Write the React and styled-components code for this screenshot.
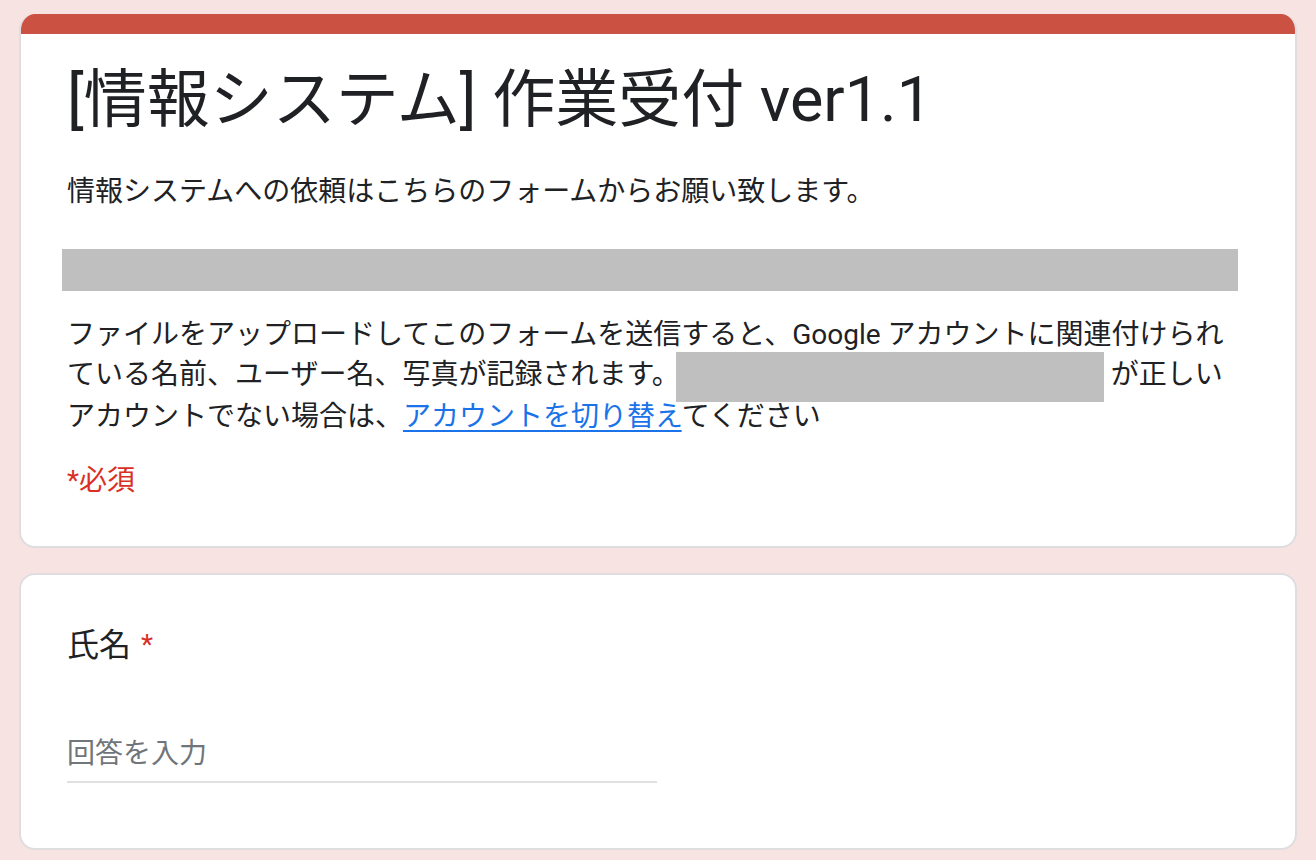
import React from 'react'
import styled, { createGlobalStyle } from 'styled-components'

const GlobalStyle = createGlobalStyle`
  html, body {
    margin: 0;
    padding: 0;
    background: #f6e3e2;
  }
  body {
    font-family: Roboto, "Noto Sans CJK JP", sans-serif;
    color: #202124;
  }
`;

const Page = styled.div`
  width: 1278px;
  margin: 0 auto;
  padding: 14px 0 12px;
  display: flex;
  flex-direction: column;
  gap: 25px;
`;

const Card = styled.section`
  background: #fff;
  border: 2px solid #dfdde0;
  border-radius: 16px;
  overflow: hidden;
  display: flex;
  flex-direction: column;
`;

const HeaderCard = styled(Card)`
  border-top: none;
  &::before {
    content: '';
    display: block;
    height: 20px;
    margin: 0 -2px;
    background: #cb5142;
  }
`;

const HeaderBody = styled.div`
  padding: 26px 46px 45px;
  display: flex;
  flex-direction: column;
`;

const Title = styled.h1`
  margin: 0;
  font-size: 63px;
  line-height: 80px;
  font-weight: 400;
  color: #202124;
`;

const Text = styled.p`
  margin: ${p => p.$top || 0}px 0 0;
  font-size: 28px;
  line-height: 40px;
  color: #202124;
`;

const Redacted = styled.div`
  margin: 37px 0 0 -5px;
  width: 1176px;
  height: 42px;
  background: #bfbfbf;
`;

const InlineRedacted = styled.span`
  display: inline-block;
  width: 428px;
  height: 50px;
  margin: -5px 7px -5px -4px;
  vertical-align: middle;
  background: #bfbfbf;
`;

const SwitchLink = styled.a`
  color: #1a73e8;
  text-decoration: underline;
  text-underline-offset: 4px;
`;

const Required = styled.p`
  margin: 24px 0 0;
  font-size: 28px;
  line-height: 40px;
  color: #d93025;
`;

const QuestionBody = styled.div`
  padding: 46px 46px 65px;
  display: flex;
  flex-direction: column;
`;

const QuestionTitle = styled.div`
  font-size: 32px;
  line-height: 48px;
  color: #202124;
`;

const Star = styled.span`
  color: #d93025;
  padding-left: 10px;
  font-size: 28px;
  vertical-align: 2px;
`;

const AnswerInput = styled.input`
  margin-top: 58px;
  width: 590px;
  height: 56px;
  box-sizing: border-box;
  padding: 0;
  border: none;
  border-bottom: 2px solid #e0e0e0;
  outline: none;
  background: transparent;
  font-family: Roboto, "Noto Sans CJK JP", sans-serif;
  font-size: 28px;
  color: #202124;
  &::placeholder {
    color: #70757a;
  }
`;

export default function App() {
  return (
    <>
      <GlobalStyle />
      <Page>
        <HeaderCard>
          <HeaderBody>
            <Title>[情報システム] 作業受付 ver1.1</Title>
            <Text $top={32}>情報システムへの依頼はこちらのフォームからお願い致します。</Text>
            <Redacted />
            <Text $top={24}>
              ファイルをアップロードしてこのフォームを送信すると、Google アカウントに関連付けられ<br />
              ている名前、ユーザー名、写真が記録されます。<InlineRedacted />が正しい<br />
              アカウントでない場合は、<SwitchLink href="#">アカウントを切り替え</SwitchLink>てください
            </Text>
            <Required>*必須</Required>
          </HeaderBody>
        </HeaderCard>
        <Card>
          <QuestionBody>
            <QuestionTitle>氏名<Star>*</Star></QuestionTitle>
            <AnswerInput placeholder="回答を入力" />
          </QuestionBody>
        </Card>
      </Page>
    </>
  );
}
